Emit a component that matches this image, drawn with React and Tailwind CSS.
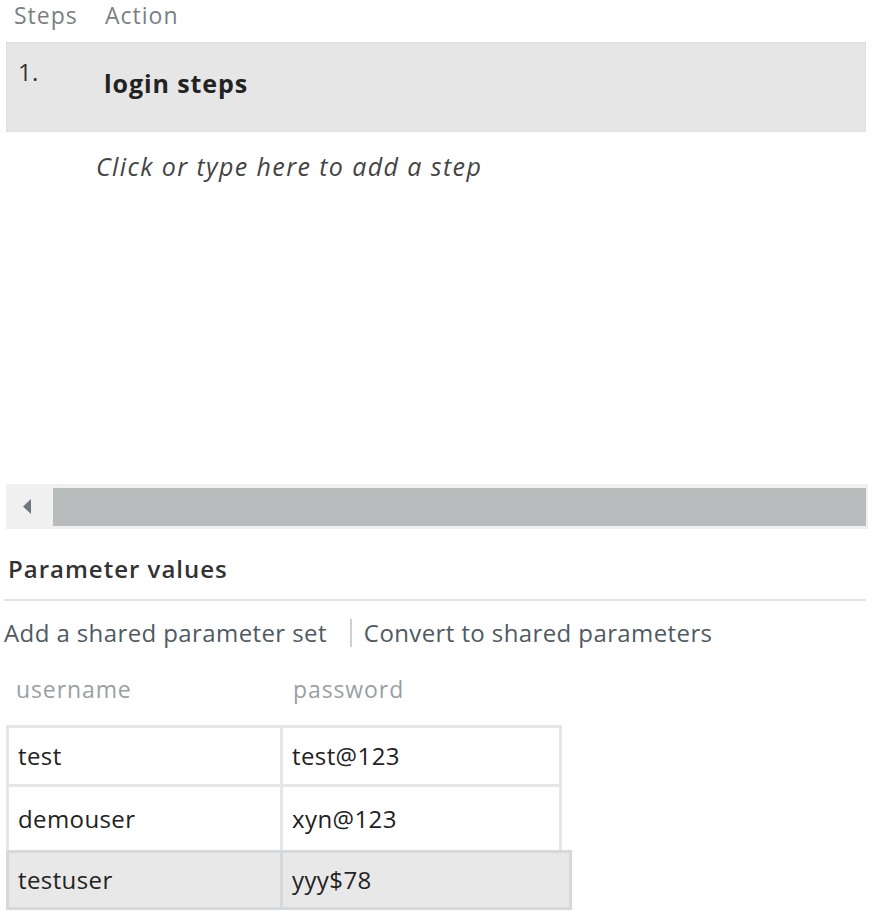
import React from 'react';

const rows = [
  { user: 'test', pass: 'test@123', h: 'h-[59px]' },
  { user: 'demouser', pass: 'xyn@123', h: 'h-[66px]' },
];

export default function App() {
  return (
    <div className="w-[873px] h-[918px] overflow-hidden bg-white text-[24px] tracking-[0.4px] text-[#222]" style={{ fontFamily: '"Open Sans", "Noto Sans", sans-serif' }}>
      {/* steps grid header */}
      <div className="flex h-[30px] items-center text-[23px] leading-[30px] tracking-[1px] text-[#7b7f84]">
        <span className="w-[105px] pl-[14px]">Steps</span>
        <span>Action</span>
      </div>

      <div className="mt-[12px] ml-[6px] flex h-[90px] w-[860px] border border-dotted border-[#d8d8d8] bg-[#e6e6e6]">
        <span className="w-[97px] pl-[11px] pt-[15px] leading-[28px] text-[#333]">1.</span>
        <span className="pt-[24px] leading-[32px] text-[25px] font-bold tracking-[0.9px] text-[#222]">login steps</span>
      </div>

      <div className="mt-[18px] flex h-[34px] items-center pl-[96px] text-[25px] italic tracking-[1.4px] text-[#444]">Click or type here to add a step</div>

      {/* horizontal scrollbar */}
      <div className="mt-[300px] ml-[6px] flex h-[45px] w-[862px] items-center gap-[2px] bg-[#f0f0f0]">
        <div className="flex h-full w-[45px] items-center justify-center pr-[4px]">
          <svg width="10" height="15" viewBox="0 0 10 15">
            <path d="M9 0 L1 7.5 L9 15 Z" fill="#6e7780" />
          </svg>
        </div>
        <div className="mr-[2px] h-[38px] flex-1 bg-[#b8bbbc]" />
      </div>

      <div className="mt-[25px] flex h-[30px] items-center pl-[8px] font-semibold tracking-[1px] text-[#333]">Parameter values</div>
      <div className="mt-[15px] ml-[4px] h-[2px] w-[862px] bg-[#e4e4e4]" />

      <div className="mt-[17px] flex h-[30px] items-center pl-[4px] text-[#4f5a63]">
        <span>Add a shared parameter set</span>
        <span className="ml-[23px] mr-[12px] h-[28px] w-[2px] bg-[#d0d0d0]" />
        <span>Convert to shared parameters</span>
      </div>

      <div className="mt-[26px] flex h-[30px] items-center text-[23px] tracking-[0.9px] text-[#9a9fa3]">
        <span className="w-[293px] pl-[16px]">username</span>
        <span>password</span>
      </div>

      <div className="mt-[21px] ml-[6px] w-[566px]">
        {rows.map((r) => (
          <div key={r.user} className={`flex ${r.h} w-[556px] border-x-[3px] border-t-[3px] border-[#e6e6e6]`}>
            <div className="flex w-[274px] items-center border-r-[3px] border-[#e6e6e6] pl-[9px]">{r.user}</div>
            <div className="flex flex-1 items-center pl-[9px]">{r.pass}</div>
          </div>
        ))}
        <div className="flex h-[60px] w-[566px] border-[3px] border-[#d5d9db] bg-[#e8e8e8]">
          <div className="flex w-[274px] items-center border-r-[3px] border-[#d5d9db] pl-[9px]">testuser</div>
          <div className="flex flex-1 items-center pl-[9px]">yyy$78</div>
        </div>
      </div>
    </div>
  );
}
